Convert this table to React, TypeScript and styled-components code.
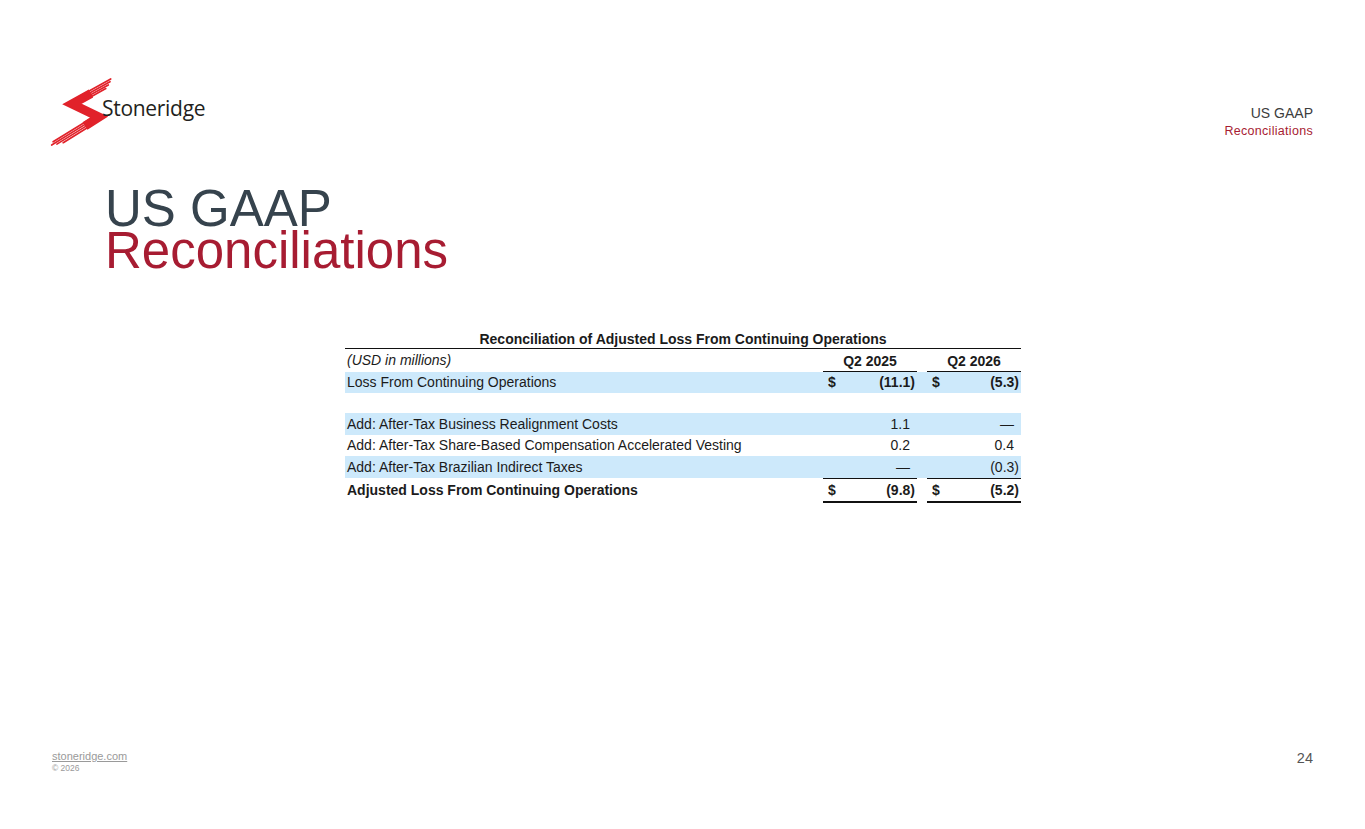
import React from "react";
import styled, { createGlobalStyle } from "styled-components";

const GlobalStyle = createGlobalStyle`
  html, body {
    margin: 0;
    padding: 0;
    background: #ffffff;
  }
  body {
    font-family: "Liberation Sans", Arial, sans-serif;
  }
`;

interface lineItem {
  label: string;
  q2025?: string;
  q2026?: string;
  dollar?: boolean;
  shaded?: boolean;
  total?: boolean;
  spacer?: boolean;
}

const rows: lineItem[] = [
  { label: "Loss From Continuing Operations", q2025: "(11.1)", q2026: "(5.3)", dollar: true, shaded: true },
  { label: "", spacer: true },
  { label: "Add: After-Tax Business Realignment Costs", q2025: "1.1", q2026: "—", shaded: true },
  { label: "Add: After-Tax Share-Based Compensation Accelerated Vesting", q2025: "0.2", q2026: "0.4" },
  { label: "Add: After-Tax Brazilian Indirect Taxes", q2025: "—", q2026: "(0.3)", shaded: true },
  { label: "Adjusted Loss From Continuing Operations", q2025: "(9.8)", q2026: "(5.2)", dollar: true, total: true },
];

const Page = styled.div`
  width: 1365px;
  height: 829px;
  display: flex;
  flex-direction: column;
  box-sizing: border-box;
  overflow: hidden;
`;

const Header = styled.header`
  display: flex;
  justify-content: space-between;
  align-items: flex-start;
  padding: 75px 52px 0 45px;
`;

const Logo = styled.div`
  display: flex;
  align-items: flex-start;
  height: 75px;
`;

const LogoMark = styled.svg`
  width: 57px;
  height: 75px;
  overflow: visible;
  flex-shrink: 0;
`;

const LogoText = styled.span`
  font-family: "Open Sans", "Noto Sans", sans-serif;
  font-size: 21px;
  color: #231f20;
  margin-top: 19px;
  letter-spacing: -0.3px;
`;

const HeaderLabel = styled.div`
  margin-top: 29.5px;
  display: flex;
  flex-direction: column;
  align-items: flex-end;
`;

const HeaderTitle = styled.span`
  font-size: 14px;
  line-height: 17px;
  color: #3d3d3d;
`;

const HeaderSub = styled.span`
  font-size: 12.5px;
  line-height: 16px;
  letter-spacing: 0.3px;
  color: #a71c32;
  margin-top: 1px;
`;

const Title = styled.h1`
  margin: 38px 0 0 105px;
  font-weight: normal;
  font-size: 51px;
  line-height: 42px;
  display: flex;
  flex-direction: column;
`;

const TitleLine = styled.span<{ $accent?: boolean }>`
  color: ${(p) => (p.$accent ? "#a71c32" : "#36434d")};
`;

const Table = styled.div`
  margin: 59px 0 0 345px;
  width: 676px;
  color: #1b1b1b;
  font-size: 14px;
`;

const Caption = styled.div`
  text-align: center;
  font-weight: bold;
  line-height: 17px;
  border-bottom: 1.5px solid #111;
`;

const Row = styled.div<{ $shaded?: boolean; $height?: number }>`
  display: grid;
  grid-template-columns: 478px 94px 10px 94px;
  height: ${(p) => p.$height ?? 21.5}px;
  background: ${(p) => (p.$shaded ? "#cde9fb" : "transparent")};
`;

const Label = styled.div<{ $bold?: boolean; $italic?: boolean }>`
  display: flex;
  align-items: center;
  padding-left: 2px;
  font-weight: ${(p) => (p.$bold ? "bold" : "normal")};
  font-style: ${(p) => (p.$italic ? "italic" : "normal")};
  white-space: nowrap;
`;

const ColHead = styled.div`
  display: flex;
  align-items: center;
  justify-content: center;
  font-weight: bold;
  border-bottom: 1.5px solid #111;
  box-sizing: border-box;
  padding-top: 2px;
`;

const Amount = styled.div<{ $bold?: boolean; $total?: boolean }>`
  display: flex;
  align-items: center;
  justify-content: space-between;
  padding: 0 2px 0 5px;
  box-sizing: border-box;
  font-weight: ${(p) => (p.$bold ? "bold" : "normal")};
  border-top: ${(p) => (p.$total ? "1px solid #111" : "none")};
  border-bottom: ${(p) => (p.$total ? "2px solid #111" : "none")};
`;

const Value = styled.span<{ $paren: boolean }>`
  padding-right: ${(p) => (p.$paren ? 0 : 5)}px;
`;

const Footer = styled.footer`
  margin-top: auto;
  display: flex;
  justify-content: space-between;
  align-items: flex-start;
  padding: 0 52px 55px 52px;
`;

const FooterLeft = styled.div`
  display: flex;
  flex-direction: column;
`;

const SiteLink = styled.a`
  font-size: 11px;
  line-height: 13px;
  color: #9a9a9a;
  text-decoration: underline;
`;

const Copyright = styled.span`
  font-size: 8.5px;
  line-height: 11px;
  color: #9a9a9a;
`;

const PageNumber = styled.span`
  font-size: 14.5px;
  line-height: 17px;
  color: #555;
`;

// stripe ends of the logo mark, in the mark's own 57x75 box
const stripes: [number, number, number, number][] = [
  [36.0, 20.6, 65.7, 4.0],
  [37.9, 21.8, 65.0, 6.7],
  [39.7, 23.1, 63.3, 10.0],
  [41.6, 24.3, 60.8, 13.6],
  [43.9, 44.7, 8.1, 66.8],
  [45.0, 46.4, 6.7, 70.0],
  [46.0, 48.1, 11.9, 69.1],
  [47.1, 49.8, 18.2, 67.7],
];

const AmountCell = ({ value, dollar, bold, total }: { value?: string; dollar?: boolean; bold?: boolean; total?: boolean }) => (
  <Amount $bold={bold} $total={total}>
    <span>{dollar ? "$" : ""}</span>
    <Value $paren={!!value && value.endsWith(")")}>{value}</Value>
  </Amount>
);

const App: React.FC = () => {
  return (
    <Page>
      <GlobalStyle />
      <Header>
        <Logo>
          <LogoMark viewBox="0 0 57 75">
            <path d="M46 18.5 L27 29 L54 42 L40 51" fill="none" stroke="#e1222a" strokeWidth={9} strokeLinejoin="miter" strokeMiterlimit={10} />
            {stripes.map(([x1, y1, x2, y2], i) => (
              <line key={i} x1={x1} y1={y1} x2={x2} y2={y2} stroke="#e1222a" strokeWidth={1.7} strokeLinecap="round" />
            ))}
          </LogoMark>
          <LogoText>Stoneridge</LogoText>
        </Logo>
        <HeaderLabel>
          <HeaderTitle>US GAAP</HeaderTitle>
          <HeaderSub>Reconciliations</HeaderSub>
        </HeaderLabel>
      </Header>

      <Title>
        <TitleLine>US GAAP</TitleLine>
        <TitleLine $accent>Reconciliations</TitleLine>
      </Title>

      <Table>
        <Caption>Reconciliation of Adjusted Loss From Continuing Operations</Caption>
        <Row $height={22.5}>
          <Label $italic>(USD in millions)</Label>
          <ColHead>Q2 2025</ColHead>
          <div />
          <ColHead>Q2 2026</ColHead>
        </Row>
        {rows.map((r, index) =>
          r.spacer ? (
            <Row key={index} $height={20} />
          ) : (
            <Row key={index} $shaded={r.shaded} $height={r.total ? 25 : 21.5}>
              <Label $bold={r.total}>{r.label}</Label>
              <AmountCell value={r.q2025} dollar={r.dollar} bold={r.dollar} total={r.total} />
              <div />
              <AmountCell value={r.q2026} dollar={r.dollar} bold={r.dollar} total={r.total} />
            </Row>
          )
        )}
      </Table>

      <Footer>
        <FooterLeft>
          <SiteLink href="#">stoneridge.com</SiteLink>
          <Copyright>© 2026</Copyright>
        </FooterLeft>
        <PageNumber>24</PageNumber>
      </Footer>
    </Page>
  );
};

export default App;
